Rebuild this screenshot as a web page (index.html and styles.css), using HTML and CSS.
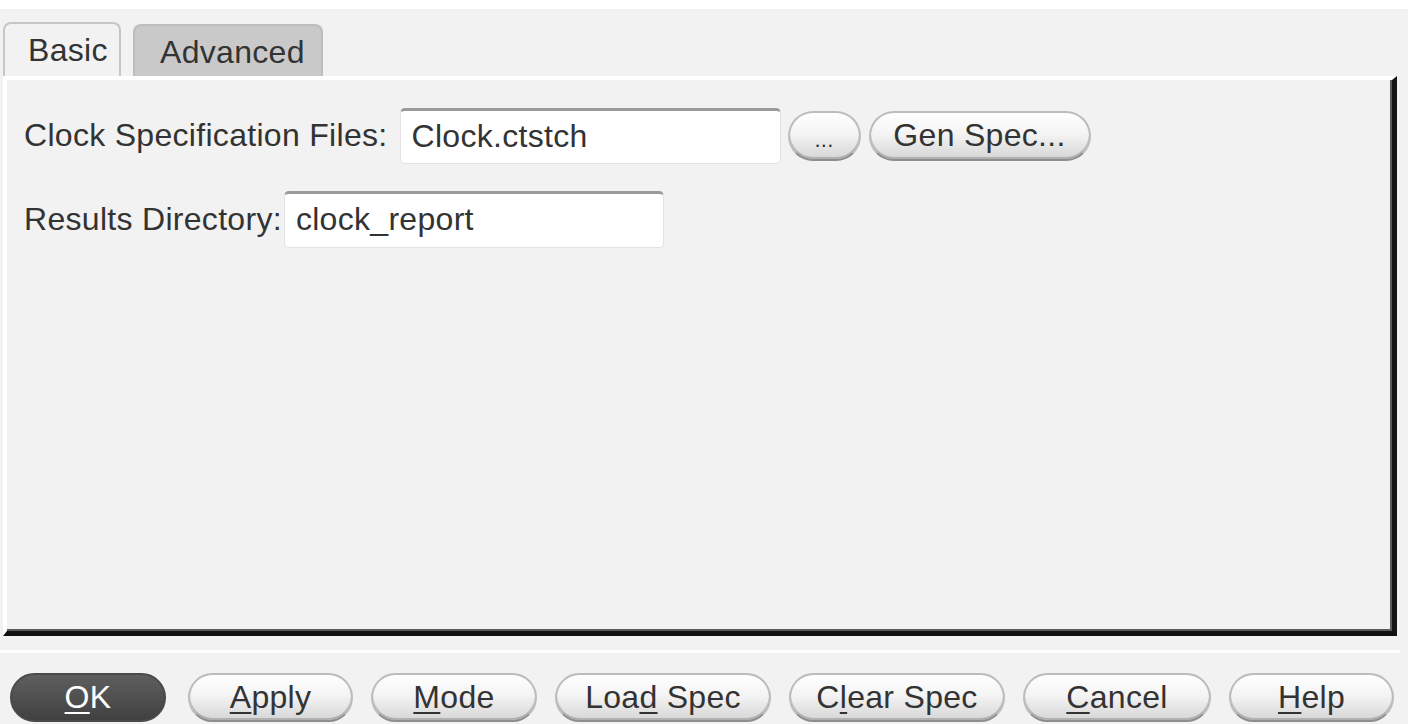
FILE: index.html
```html
<html>
<head>
	<link rel="stylesheet" href="styles.css">
</head>
<body>
	<div class='topstrip'></div>
	<div class='tabs'>
		<div class='tab active'>Basic</div>
		<div class='tab'>Advanced</div>
	</div>
	<div class='panel'>
		<div class='row'>
			<span class='label first'>Clock Specification Files:</span>
			<div class='field spec'>Clock.ctstch</div>
			<div class='btn small dots'>...</div>
			<div class='btn small gen'>Gen Spec...</div>
		</div>
		<div class='row'>
			<span class='label second'>Results Directory:</span>
			<div class='field results'>clock_report</div>
		</div>
	</div>
	<div class='separator'></div>
	<div class='actions'>
		<div class='btn big ok'><span><u>O</u>K</span></div>
		<div class='btn big w165'><span><u>A</u>pply</span></div>
		<div class='btn big w166'><span><u>M</u>ode</span></div>
		<div class='btn big w216'><span>Loa<u>d</u> Spec</span></div>
		<div class='btn big w216'><span>C<u>l</u>ear Spec</span></div>
		<div class='btn big w188'><span><u>C</u>ancel</span></div>
		<div class='btn big w165'><span><u>H</u>elp</span></div>
	</div>
</body>
</html>
```

FILE: styles.css
```css
body {
	margin: 0;
	height: 724px;
	overflow: hidden;
	background-color: #f2f2f2;
	font-family: 'Liberation Sans', Arial, sans-serif;
	font-size: 32px;
	letter-spacing: 0.3px;
	color: #333333;
}

.topstrip {
	height: 9px;
	background-color: #ffffff;
}

/* tab strip */
.tabs {
	display: flex;
	align-items: flex-end;
	gap: 12px;
	padding-left: 3px;
	margin-top: 13px;
	height: 54px;
}

.tab {
	box-sizing: border-box;
	height: 52px;
	width: 190px;
	padding-left: 25px;
	padding-top: 7px;
	border: 2px solid #bdbdbd;
	border-bottom: none;
	border-radius: 8px 8px 0 0;
	background-color: #c9c9c9;
	line-height: 38px;
}

.tab.active {
	width: 118px;
	height: 54px;
	padding-left: 23px;
	padding-top: 7px;
	background-color: #f2f2f2;
	border-color: #c6c6c6;
}

/* main panel */
.panel {
	box-sizing: border-box;
	margin-left: 3px;
	width: 1394px;
	height: 560px;
	border-top: 4px solid #ffffff;
	border-left: 4px solid #ffffff;
	border-right: 5px solid #151515;
	border-bottom: 5px solid #111111;
	box-shadow: inset -2px -2px 0 #5a5a5a;
	padding: 27px 0 0 17px;
	display: flex;
	flex-direction: column;
	gap: 27px;
}

.row {
	display: flex;
	align-items: center;
	height: 57px;
}

.label.first {
	margin-right: 12px;
}

.label.second {
	margin-right: 2px;
}

.field {
	box-sizing: border-box;
	height: 56px;
	padding-left: 11px;
	line-height: 50px;
	background-color: #ffffff;
	border: 1px solid #e2e2e2;
	border-top: 3px solid #9a9a9a;
	border-radius: 5px;
}

.spec {
	width: 381px;
}

.results {
	width: 380px;
	height: 57px;
}

/* rounded push buttons */
.btn {
	box-sizing: border-box;
	display: flex;
	align-items: center;
	justify-content: center;
	border: 2px solid #bcbcbc;
	border-bottom-color: #8e8e8e;
	border-radius: 26px;
	background: linear-gradient(#ffffff, #f4f4f4 45%, #d6d6d6);
	box-shadow: inset 0 -2px 0 #b0b0b0;
	color: #333333;
}

.btn u {
	text-underline-offset: 4px;
	text-decoration-thickness: 2px;
}

.small {
	height: 50px;
}

.dots {
	width: 73px;
	margin-left: 7px;
	font-size: 22px;
	padding-top: 8px;
}

.gen {
	width: 222px;
	margin-left: 8px;
}

.separator {
	margin-top: 14px;
	width: 1400px;
	height: 3px;
	background-color: #ffffff;
}

.actions {
	display: flex;
	gap: 18px;
	padding-left: 10px;
	margin-top: 20px;
}

.big {
	height: 49px;
}

.ok {
	width: 156px;
	margin-right: 4px;
	background: linear-gradient(#5e5e5e, #505050 50%, #404040);
	border-color: #4a4a4a;
	box-shadow: none;
	color: #ffffff;
}

.w165 { width: 165px; }
.w166 { width: 166px; }
.w188 { width: 188px; }
.w216 { width: 216px; }
```
